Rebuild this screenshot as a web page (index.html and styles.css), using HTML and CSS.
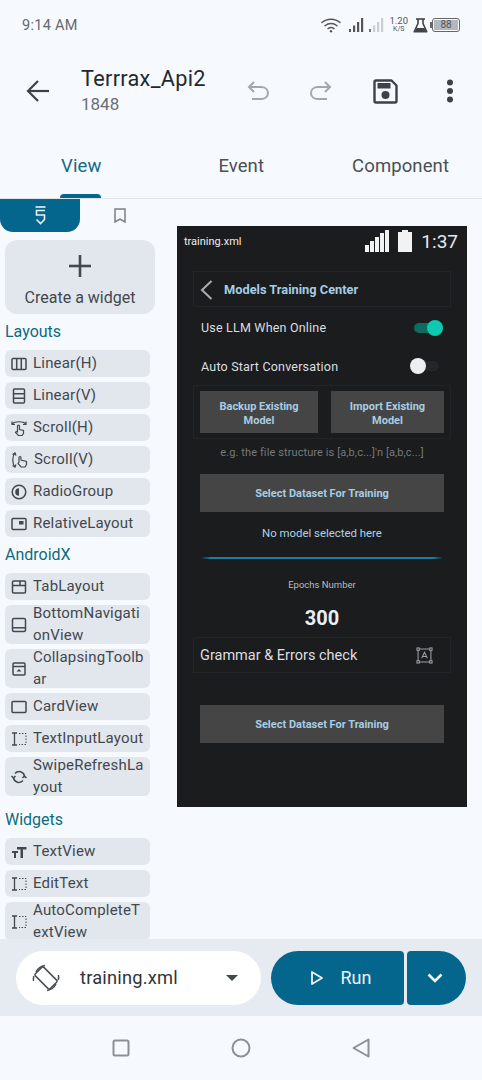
FILE: index.html
```html
<!DOCTYPE html>
<html lang="en">
<head>
  <meta charset="UTF-8">
  <title>Terrrax_Api2</title>
  <link rel="stylesheet" href="styles.css">
</head>
<body>
<div class="app">

  <!-- status bar -->
  <div class="status">
    <span class="status-time">9:14 AM</span>
    <div class="status-icons">
      <svg class="wifi" width="20" height="16" viewBox="0 0 20 16" fill="none" stroke="#555" stroke-width="1.5" stroke-linecap="round"><path d="M1 5.5C6 1 14 1 19 5.5"/><path d="M4 8.8C7.5 5.8 12.5 5.8 16 8.8"/><path d="M7 11.6C8.8 10.4 11.2 10.4 13 11.6"/><circle cx="10" cy="14.2" r="1.2" fill="#555" stroke="none"/></svg>
      <svg width="15" height="14" viewBox="0 0 15 14" fill="#555"><rect x="0" y="11" width="2" height="3"/><rect x="4" y="7.5" width="2.2" height="6.5"/><rect x="8" y="4" width="2.2" height="10"/><rect x="12" y="0" width="2.2" height="14"/></svg>
      <svg width="15" height="14" viewBox="0 0 15 14" fill="#c9ced3"><rect x="0" y="11" width="2" height="3" fill="#777"/><rect x="4" y="7.5" width="2.2" height="6.5"/><rect x="8" y="4" width="2.2" height="10"/><rect x="12" y="0" width="2.2" height="14"/></svg>
      <div class="speed"><span>1.20</span><span class="speed-unit">K/S</span></div>
      <svg width="15" height="15" viewBox="0 0 15 15" fill="none" stroke="#444" stroke-width="1.6" stroke-linejoin="round"><path d="M3 1H12"/><path d="M5 1V5.5L1.2 13.8H13.8L10 5.5V1"/><path d="M3.5 10H11.5L13 13.5H2Z" fill="#444" stroke="none"/></svg>
      <div class="battery"><span class="battery-level">88</span></div>
    </div>
  </div>

  <!-- app bar -->
  <div class="appbar">
    <svg class="back" width="24" height="24" viewBox="0 0 24 24" fill="none" stroke="#3c4247" stroke-width="2.2"><path d="M23 12H2"/><path d="M12 2L2 12L12 22"/></svg>
    <div class="appbar-title">
      <div class="project-name">Terrrax_Api2</div>
      <div class="project-id">1848</div>
    </div>
    <div class="appbar-actions">
      <svg width="22" height="20" viewBox="0 0 22 20" fill="none" stroke="#a2a7ab" stroke-width="2"><path d="M7 1L2 6L7 11"/><path d="M2 6H14C18 6 21 8.500 21 12C21 15.500 18 18 14 18H5"/></svg>
      <svg width="22" height="20" viewBox="0 0 22 20" fill="none" stroke="#a2a7ab" stroke-width="2"><path d="M15 1L20 6L15 11"/><path d="M20 6H8C4 6 1 8.500 1 12C1 15.500 4 18 8 18H17"/></svg>
      <svg width="25" height="25" viewBox="0 0 25 25"><path fill="none" stroke="#3c4247" stroke-width="2.400" stroke-linejoin="round" d="M3 1.500H18.500L23.500 6.500V22C23.500 22.800 22.800 23.500 22 23.500H3C2.200 23.500 1.500 22.800 1.500 22V3C1.500 2.200 2.200 1.500 3 1.500Z"/><rect x="4.500" y="4" width="13" height="5.500" fill="#3c4247"/><circle cx="12.500" cy="16" r="4" fill="#3c4247"/></svg>
      <svg class="more" width="8" height="24" viewBox="0 0 8 24" fill="#3c4247"><circle cx="4" cy="3.500" r="3"/><circle cx="4" cy="12" r="3"/><circle cx="4" cy="20.500" r="3"/></svg>
    </div>
  </div>

  <!-- tabs -->
  <div class="tabs">
    <div class="tab tab-view active">View</div>
    <div class="tab tab-event">Event</div>
    <div class="tab tab-component">Component</div>
  </div>

  <div class="main">
    <div class="sidebar">
      <div class="side-tabs">
        <div class="side-tab selected">
          <svg width="11" height="19" viewBox="0 0 11 19" fill="none" stroke="#e8f3f8" stroke-width="1.600"><path d="M0.500 1H10.500"/><path d="M10 4.500H1.500V9H9.500V13.500L5.500 17.500L1.500 13.500"/></svg>
        </div>
        <div class="side-tab">
          <svg width="12" height="15" viewBox="0 0 12 15" fill="none" stroke="#7b8085" stroke-width="1.500"><path d="M1 1H11V14L6 11L1 14Z"/></svg>
        </div>
      </div>

      <div class="create-card">
        <svg width="24" height="24" viewBox="0 0 24 24" fill="none" stroke="#43484d" stroke-width="2.600"><path d="M12 1V23"/><path d="M1 12H23"/></svg>
        <span>Create a widget</span>
      </div>

      <div class="group-title">Layouts</div>
      <div class="widget">
        <svg width="16" height="16" viewBox="0 0 16 16" fill="none" stroke="#43484d" stroke-width="1.500"><rect x="1" y="2.500" width="14" height="11" rx="1"/><path d="M5.700 2.500V13.500M10.300 2.500V13.500"/></svg>
        <span>Linear(H)</span>
      </div>
      <div class="widget">
        <svg width="16" height="16" viewBox="0 0 16 16" fill="none" stroke="#43484d" stroke-width="1.500"><rect x="2.500" y="1" width="11" height="14" rx="1"/><path d="M2.500 5.700H13.500M2.500 10.300H13.500"/></svg>
        <span>Linear(V)</span>
      </div>
      <div class="widget">
        <svg width="16" height="16" viewBox="0 0 16 16" fill="none" stroke="#43484d" stroke-width="1.200"><path d="M1 4C4 1 12 1 15 4"/><path d="M1 1.500V4.500H4M15 1.500V4.500H12"/><path d="M6.500 12V6A1 1 0 0 1 8.500 6V9.500L12.500 10.500V13.500L11 15.500H7.500L4.500 12.500L5.200 11.500Z"/></svg>
        <span>Scroll(H)</span>
      </div>
      <div class="widget">
        <svg width="17" height="16" viewBox="0 0 17 16" fill="none" stroke="#43484d" stroke-width="1.200"><path d="M4 1C1 4 1 11 4 15"/><path d="M1.500 2.500L4 1L5 3.500M1.500 13.500L4 15L5 12.500"/><path d="M8 10V5.500A1 1 0 0 1 10 5.500V8L15.500 9.500V12.500L14 15H10L7 11.500Z"/></svg>
        <span>Scroll(V)</span>
      </div>
      <div class="widget">
        <svg width="16" height="16" viewBox="0 0 16 16"><circle cx="8" cy="8" r="6.800" fill="none" stroke="#43484d" stroke-width="1.500"/><path d="M8 4.200A3.800 3.800 0 0 0 8 11.800Z" fill="#43484d"/></svg>
        <span>RadioGroup</span>
      </div>
      <div class="widget">
        <svg width="16" height="16" viewBox="0 0 16 16"><rect x="1" y="2.500" width="14" height="11" rx="1" fill="none" stroke="#43484d" stroke-width="1.500"/><rect x="8" y="5" width="4.500" height="3.500" fill="#43484d"/></svg>
        <span>RelativeLayout</span>
      </div>

      <div class="group-title">AndroidX</div>
      <div class="widget">
        <svg width="16" height="16" viewBox="0 0 16 16" fill="none" stroke="#43484d" stroke-width="1.500"><rect x="1.500" y="2" width="13" height="12" rx="1"/><path d="M1.500 6.500H14.500M9 2V6.500"/></svg>
        <span>TabLayout</span>
      </div>
      <div class="widget tall">
        <svg width="16" height="16" viewBox="0 0 16 16" fill="none" stroke="#43484d" stroke-width="1.500"><rect x="1.500" y="1.500" width="13" height="13" rx="1.500"/><path d="M1.500 10.800H14.500"/></svg>
        <span>BottomNavigationView</span>
      </div>
      <div class="widget tall">
        <svg width="16" height="16" viewBox="0 0 16 16"><rect x="2" y="2" width="12" height="12" rx="1" fill="none" stroke="#43484d" stroke-width="1.500"/><path d="M2 5.500H14" stroke="#43484d" stroke-width="1.500"/><path d="M5.500 10.500L8 8L10.500 10.500Z" fill="#43484d"/></svg>
        <span>CollapsingToolbar</span>
      </div>
      <div class="widget">
        <svg width="16" height="16" viewBox="0 0 16 16" fill="none" stroke="#43484d" stroke-width="1.500"><rect x="1" y="2.500" width="14" height="11" rx="1"/></svg>
        <span>CardView</span>
      </div>
      <div class="widget">
        <svg width="16" height="16" viewBox="0 0 16 16" fill="none" stroke="#43484d"><path d="M1 2H6M1 14H6M3.500 2V14" stroke-width="1.300"/><path d="M8 2.500H15V13.500H8" stroke-width="1" stroke-dasharray="1.500 1.500"/></svg>
        <span>TextInputLayout</span>
      </div>
      <div class="widget tall">
        <svg width="16" height="16" viewBox="0 0 16 16" fill="none" stroke="#43484d" stroke-width="1.500"><path d="M13.500 7A5.500 5.500 0 0 0 4 4.500"/><path d="M2.500 9A5.500 5.500 0 0 0 12 11.500"/><path d="M0.500 7L2.500 9L4.500 7M11.500 9L13.500 7L15.500 9"/></svg>
        <span>SwipeRefreshLayout</span>
      </div>

      <div class="group-title group-widgets">Widgets</div>
      <div class="widget">
        <svg width="16" height="16" viewBox="0 0 16 16" fill="#43484d"><path d="M6 3H15.500V5.500H12V14H9.500V5.500H6Z"/><path d="M1 7H7V9H5V14H3V9H1Z"/></svg>
        <span>TextView</span>
      </div>
      <div class="widget">
        <svg width="16" height="16" viewBox="0 0 16 16" fill="none" stroke="#43484d"><path d="M1 2H6M1 14H6M3.500 2V14" stroke-width="1.300"/><path d="M8 2.500H15V13.500H8" stroke-width="1" stroke-dasharray="1.500 1.500"/></svg>
        <span>EditText</span>
      </div>
      <div class="widget tall">
        <svg width="16" height="16" viewBox="0 0 16 16" fill="none" stroke="#43484d"><path d="M1 2H6M1 14H6M3.500 2V14" stroke-width="1.300"/><path d="M8 2.500H15V13.500H8" stroke-width="1" stroke-dasharray="1.500 1.500"/></svg>
        <span>AutoCompleteTextView</span>
      </div>
    </div>

    <!-- layout preview -->
    <div class="preview">
      <div class="pv-status">
        <span class="pv-file">training.xml</span>
        <svg width="24" height="22" viewBox="0 0 24 22" fill="#f2f2f2"><rect x="0" y="15" width="4" height="7"/><rect x="5" y="11" width="4" height="11"/><rect x="10" y="7" width="4" height="15"/><rect x="15" y="3" width="4" height="19"/><rect x="20" y="0" width="4" height="22"/></svg>
        <svg class="pv-battery" width="14" height="22" viewBox="0 0 14 22" fill="#f2f2f2"><path d="M4 0H10V2H14V22H0V2H4Z"/></svg>
        <span class="pv-time">1:37</span>
      </div>

      <div class="pv-box pv-toolbar">
        <svg width="13" height="20" viewBox="0 0 13 20" fill="none" stroke="#a9aeb1" stroke-width="2"><path d="M11.500 1L2 10L11.500 19"/></svg>
        <span>Models Training Center</span>
      </div>

      <div class="pv-row">
        <span>Use LLM When Online</span>
        <div class="switch on"><div class="thumb"></div></div>
      </div>
      <div class="pv-row pv-row-second">
        <span>Auto Start Conversation</span>
        <div class="switch"><div class="thumb"></div></div>
      </div>

      <div class="pv-box pv-actions">
        <div class="pv-button pv-half-left">Backup Existing Model</div>
        <div class="pv-button pv-half-right">Import Existing Model</div>
      </div>

      <div class="pv-hint">e.g. the file structure is [a,b,c...]'n [a,b,c...]</div>
      <div class="pv-button pv-wide">Select Dataset For Training</div>
      <div class="pv-none">No model selected here</div>
      <div class="pv-progress"></div>
      <div class="pv-epochs">Epochs Number</div>
      <div class="pv-count">300</div>

      <div class="pv-box pv-grammar">
        <span>Grammar &amp; Errors check</span>
        <svg width="17" height="17" viewBox="0 0 18 18" fill="none" stroke="#9aa0a3" stroke-width="1.100"><rect x="1" y="1" width="2.500" height="2.500"/><rect x="14.500" y="1" width="2.500" height="2.500"/><rect x="1" y="14.500" width="2.500" height="2.500"/><rect x="14.500" y="14.500" width="2.500" height="2.500"/><path d="M3.500 2.200H14.500M3.500 15.800H14.500M2.200 3.500V14.500M15.800 3.500V14.500"/><path d="M6 12L9 5.500L12 12M7 10H11"/></svg>
      </div>

      <div class="pv-button pv-wide pv-last">Select Dataset For Training</div>
    </div>
  </div>

  <!-- bottom actions -->
  <div class="actionbar">
    <div class="file-pill">
      <svg width="28" height="28" viewBox="0 0 28 28" fill="none" stroke="#4a4f54" stroke-width="1.500"><rect x="8" y="3.500" width="12" height="21" rx="1.500" transform="rotate(-45 14 14)"/><path d="M4 8A12 12 0 0 1 13 1.500M24 20A12 12 0 0 1 15 26.500"/><path d="M1.500 17A12 12 0 0 1 1.800 12M26.500 11A12 12 0 0 1 26.200 16"/></svg>
      <span class="file-name">training.xml</span>
      <svg width="12" height="6" viewBox="0 0 12 6" fill="#43484d"><path d="M0 0H12L6 6Z"/></svg>
    </div>
    <div class="run-button">
      <svg width="14" height="16" viewBox="0 0 14 16" fill="none" stroke="#eaf4f8" stroke-width="1.800" stroke-linejoin="round"><path d="M2 2L12 8L2 14Z"/></svg>
      <span>Run</span>
    </div>
    <div class="run-more">
      <svg width="16" height="10" viewBox="0 0 16 10" fill="none" stroke="#f2f8fb" stroke-width="2.600"><path d="M1.500 1.500L8 8L14.500 1.500"/></svg>
    </div>
  </div>

  <!-- system nav -->
  <div class="navbar">
    <svg width="18" height="18" viewBox="0 0 18 18" fill="none" stroke="#8c9094" stroke-width="2"><rect x="1.500" y="1.500" width="15" height="15" rx="1.500"/></svg>
    <svg width="20" height="20" viewBox="0 0 20 20" fill="none" stroke="#8c9094" stroke-width="2"><circle cx="10" cy="10" r="8.500"/></svg>
    <svg width="18" height="20" viewBox="0 0 18 20" fill="none" stroke="#8c9094" stroke-width="2" stroke-linejoin="round"><path d="M16.500 1.500V18.500L1.500 10Z"/></svg>
  </div>
</div>
</body>
</html>
```

FILE: styles.css
```css
* {
  box-sizing: border-box;
}

body {
  margin: 0;
  background-color: #f6faff;
  font-family: 'Roboto', sans-serif;
  color: #43484d;
}

.app {
  width: 482px;
  height: 1080px;
  display: flex;
  flex-direction: column;
  overflow: hidden;
}

/* status bar */
.status {
  height: 48px;
  display: flex;
  align-items: center;
  justify-content: space-between;
  padding: 2px 22px 0;
}

.status-time {
  font-size: 14.5px;
  color: #63686c;
  letter-spacing: 0.3px;
}

.status-icons {
  display: flex;
  align-items: center;
  gap: 5px;
}

.wifi {
  margin-right: 3px;
}

.speed {
  display: flex;
  flex-direction: column;
  align-items: center;
  font-size: 9.5px;
  line-height: 8px;
  color: #555;
}

.speed-unit {
  font-size: 7px;
}

.battery {
  position: relative;
  width: 28px;
  height: 14px;
  border: 1px solid #666;
  border-radius: 3px;
  padding: 1px;
  margin-left: -1px;
}

.battery::before {
  content: "";
  position: absolute;
  left: -3px;
  top: 3px;
  width: 2px;
  height: 6px;
  background-color: #666;
}

.battery-level {
  display: block;
  height: 100%;
  background-color: #b4b8bc;
  font-size: 10px;
  line-height: 10px;
  text-align: center;
  color: #555;
}

/* app bar */
.appbar {
  height: 86px;
  display: flex;
  align-items: center;
  padding: 0 28px 0 26px;
}

.back {
  flex: none;
}

.appbar-title {
  margin-left: 31px;
}

.project-name {
  font-size: 21.7px;
  line-height: 26px;
  color: #24282c;
  letter-spacing: 0.3px;
}

.project-id {
  font-size: 17px;
  line-height: 24px;
  color: #6a6f74;
}

.appbar-actions {
  margin-left: auto;
  display: flex;
  align-items: center;
  gap: 41px;
}

.more {
  margin-left: 7px;
}

/* tabs */
.tabs {
  height: 65px;
  display: flex;
  border-bottom: 1px solid #dfe4ea;
}

.tab {
  position: relative;
  font-size: 18.5px;
  line-height: 64px;
  letter-spacing: 0.1px;
  color: #4a4f54;
}

.tab-view {
  margin-left: 61px;
  color: #14698a;
}

.tab-view.active::after {
  content: "";
  position: absolute;
  left: -1px;
  right: 0;
  bottom: 0;
  height: 4px;
  border-radius: 4px 4px 0 0;
  background-color: #05668d;
}

.tab-event {
  margin-left: 117px;
}

.tab-component {
  margin-left: 88px;
}

/* main */
.main {
  flex: 1;
  min-height: 0;
  display: flex;
  overflow: hidden;
}

.sidebar {
  width: 177px;
  flex: none;
  padding-right: 22px;
}

.side-tabs {
  display: flex;
  height: 33px;
  margin-bottom: 8px;
  margin-right: -22px;
}

.side-tab {
  width: 80px;
  display: flex;
  align-items: center;
  justify-content: center;
}

.side-tab.selected {
  background-color: #05668d;
  border-radius: 0 0 13px 13px;
}

.create-card {
  margin: 0 0 5px 5px;
  width: 150px;
  height: 74px;
  border-radius: 12px;
  background-color: #e2e7ee;
  display: flex;
  flex-direction: column;
  align-items: center;
  padding-top: 14px;
  gap: 10px;
  font-size: 16px;
}

.group-title {
  height: 26px;
  margin: 0 0 5px 5px;
  font-size: 16px;
  line-height: 26px;
  color: #0e6a80;
}

.group-widgets {
  margin-top: 11px;
}

.widget {
  margin: 0 0 5px 5px;
  height: 27px;
  width: 145px;
  display: flex;
  align-items: center;
  gap: 6px;
  padding-left: 6px;
  border-radius: 6px;
  background-color: #e2e7ee;
  font-size: 15px;
  line-height: 21.700px;
  letter-spacing: 0.2px;
}

.widget svg {
  flex: none;
}

.widget span {
  width: 112px;
  flex: none;
  white-space: nowrap;
}

.widget.tall {
  height: 39px;
}

.widget.tall span {
  white-space: normal;
  word-break: break-all;
}

/* preview */
.preview {
  width: 290px;
  height: 581px;
  margin-top: 27px;
  flex: none;
  background-color: #1a1c1e;
  font-family: 'Roboto', sans-serif;
  color: #dcdfe0;
}

.pv-status {
  height: 30px;
  display: flex;
  align-items: center;
  padding: 0 9px 0 7px;
}

.pv-file {
  font-size: 11px;
  color: #eee;
  margin-right: auto;
}

.pv-battery {
  margin-left: 9px;
}

.pv-time {
  margin-left: 9px;
  font-size: 19px;
  color: #e8e8e8;
}

.pv-box {
  width: 258px;
  margin-left: 16px;
  border: 1px solid #222527;
}

.pv-toolbar {
  height: 36px;
  margin-top: 15px;
  display: flex;
  align-items: center;
  gap: 11px;
  padding: 1px 0 0 6px;
  font-size: 12.8px;
  font-weight: 700;
  color: #a5cde3;
}

.pv-row {
  height: 39px;
  margin-top: 1px;
  display: flex;
  align-items: center;
  justify-content: space-between;
  padding: 0 25px 0 24px;
  font-size: 12.5px;
  letter-spacing: 0.2px;
}

.pv-row-second {
  height: 38px;
  margin-top: 0;
  padding-right: 28px;
}

.switch {
  position: relative;
  width: 28px;
  height: 10px;
  border-radius: 5px;
  background-color: #24272a;
}

.switch.on {
  background-color: #0e6b5f;
}

.thumb {
  position: absolute;
  left: -1px;
  top: -3px;
  width: 16px;
  height: 16px;
  border-radius: 50%;
  background-color: #eceef0;
}

.switch.on .thumb {
  left: 13px;
  background-color: #0cc9b0;
}

.pv-actions {
  height: 54px;
  display: flex;
  padding: 5px 6px;
}

.pv-button {
  display: flex;
  align-items: center;
  justify-content: center;
  text-align: center;
  background-color: #454545;
  font-size: 11px;
  font-weight: 700;
  line-height: 14px;
  color: #a5cde3;
}

.pv-half-left {
  width: 118px;
  height: 42px;
  padding: 3px 10px 0;
}

.pv-half-right {
  width: 113px;
  height: 42px;
  margin-left: 13px;
  padding: 3px 10px 0;
}

.pv-hint {
  height: 28px;
  text-align: center;
  font-size: 11px;
  line-height: 28px;
  letter-spacing: 0.1px;
  color: #77797b;
}

.pv-wide {
  width: 244px;
  height: 38px;
  margin: 7px 0 0 23px;
  padding-top: 1px;
}

.pv-none {
  margin-top: 10px;
  height: 22px;
  text-align: center;
  font-size: 11.400px;
  line-height: 22px;
  color: #b4d3e2;
}

.pv-progress {
  width: 242px;
  height: 2px;
  margin: 13px 0 0 24px;
  background: linear-gradient(to right, transparent, #1c7ca8 4%, #1c7ca8 96%, transparent);
}

.pv-epochs {
  margin-top: 19px;
  height: 14px;
  text-align: center;
  font-size: 9.500px;
  line-height: 14px;
  color: #b9bcbe;
}

.pv-count {
  height: 34px;
  margin-top: 9px;
  text-align: center;
  font-size: 20px;
  font-weight: 700;
  line-height: 34px;
  color: #e8f0f4;
}

.pv-grammar {
  height: 36px;
  margin-top: 2px;
  display: flex;
  align-items: center;
  justify-content: space-between;
  padding: 1px 17px 0 6px;
  font-size: 14.500px;
}

.pv-last {
  margin-top: 32px;
}

/* bottom actions */
.actionbar {
  height: 77px;
  flex: none;
  display: flex;
  align-items: center;
  padding: 0 16px;
  background-color: #e6ebf2;
}

.file-pill {
  width: 245px;
  height: 54px;
  display: flex;
  align-items: center;
  padding: 0 23px 0 16px;
  border-radius: 27px;
  background-color: #fff;
}

.file-name {
  margin-left: 20px;
  margin-right: auto;
  font-size: 18.300px;
  color: #2f3438;
  letter-spacing: 0.2px;
}

.run-button {
  width: 133px;
  height: 54px;
  margin-left: 10px;
  display: flex;
  align-items: center;
  justify-content: center;
  gap: 17px;
  padding-left: 6px;
  border-radius: 27px 4px 4px 27px;
  background-color: #05668d;
  font-size: 18px;
  color: #eaf4f8;
}

.run-more {
  width: 59px;
  height: 54px;
  margin-left: 3px;
  padding-right: 3px;
  display: flex;
  align-items: center;
  justify-content: center;
  border-radius: 4px 27px 27px 4px;
  background-color: #05668d;
}

/* system nav */
.navbar {
  height: 64px;
  flex: none;
  display: flex;
  align-items: center;
  padding: 0 112px;
  justify-content: space-between;
}
```
